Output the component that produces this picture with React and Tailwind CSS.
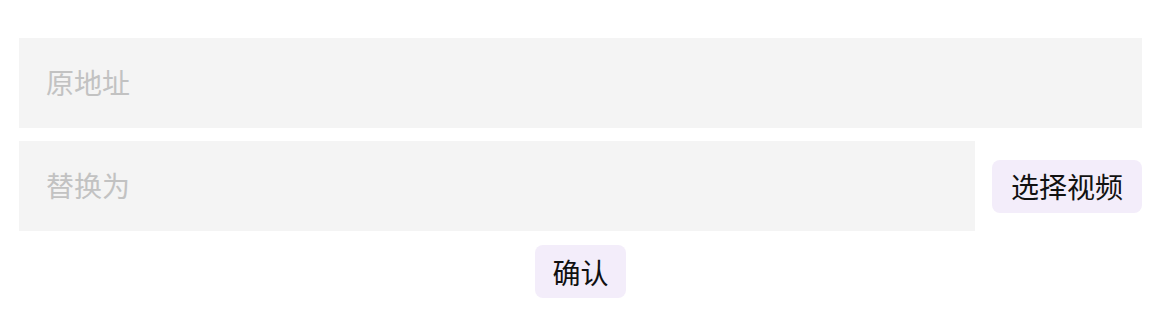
import React, { useState } from 'react'

export default function App() {
    const [src, setSrc] = useState('');
    const [dst, setDst] = useState('');

    return (
        <div
            className="w-[1164px] h-[332px] bg-white pt-[38px] pl-[19px] pr-[22px]"
            style={{ fontFamily: '"Noto Sans CJK SC", "Noto Sans", sans-serif' }}
        >
            {/* original address */}
            <input
                value={src}
                onChange={(e) => setSrc(e.target.value)}
                placeholder="原地址"
                className="block w-full h-[90px] bg-[#f4f4f4] px-[27px] pb-[3px] text-[28px] text-[#333] placeholder:text-[#c2c2c2] outline-none"
            />

            {/* replacement row */}
            <div className="flex items-center gap-[17px] mt-[13px]">
                <input
                    value={dst}
                    onChange={(e) => setDst(e.target.value)}
                    placeholder="替换为"
                    className="block flex-1 h-[90px] bg-[#f4f4f4] px-[27px] pb-[3px] text-[28px] text-[#333] placeholder:text-[#c2c2c2] outline-none"
                />
                <button className="w-[150px] h-[53px] rounded-[8px] bg-[#f3edfa] text-[28px] text-[#111] flex items-center justify-center">
                    选择视频
                </button>
            </div>

            <div className="flex justify-center mt-[14px]">
                <button className="w-[91px] h-[53px] rounded-[8px] bg-[#f3edfa] text-[28px] text-[#111] flex items-center justify-center">
                    确认
                </button>
            </div>
        </div>
    )
}
